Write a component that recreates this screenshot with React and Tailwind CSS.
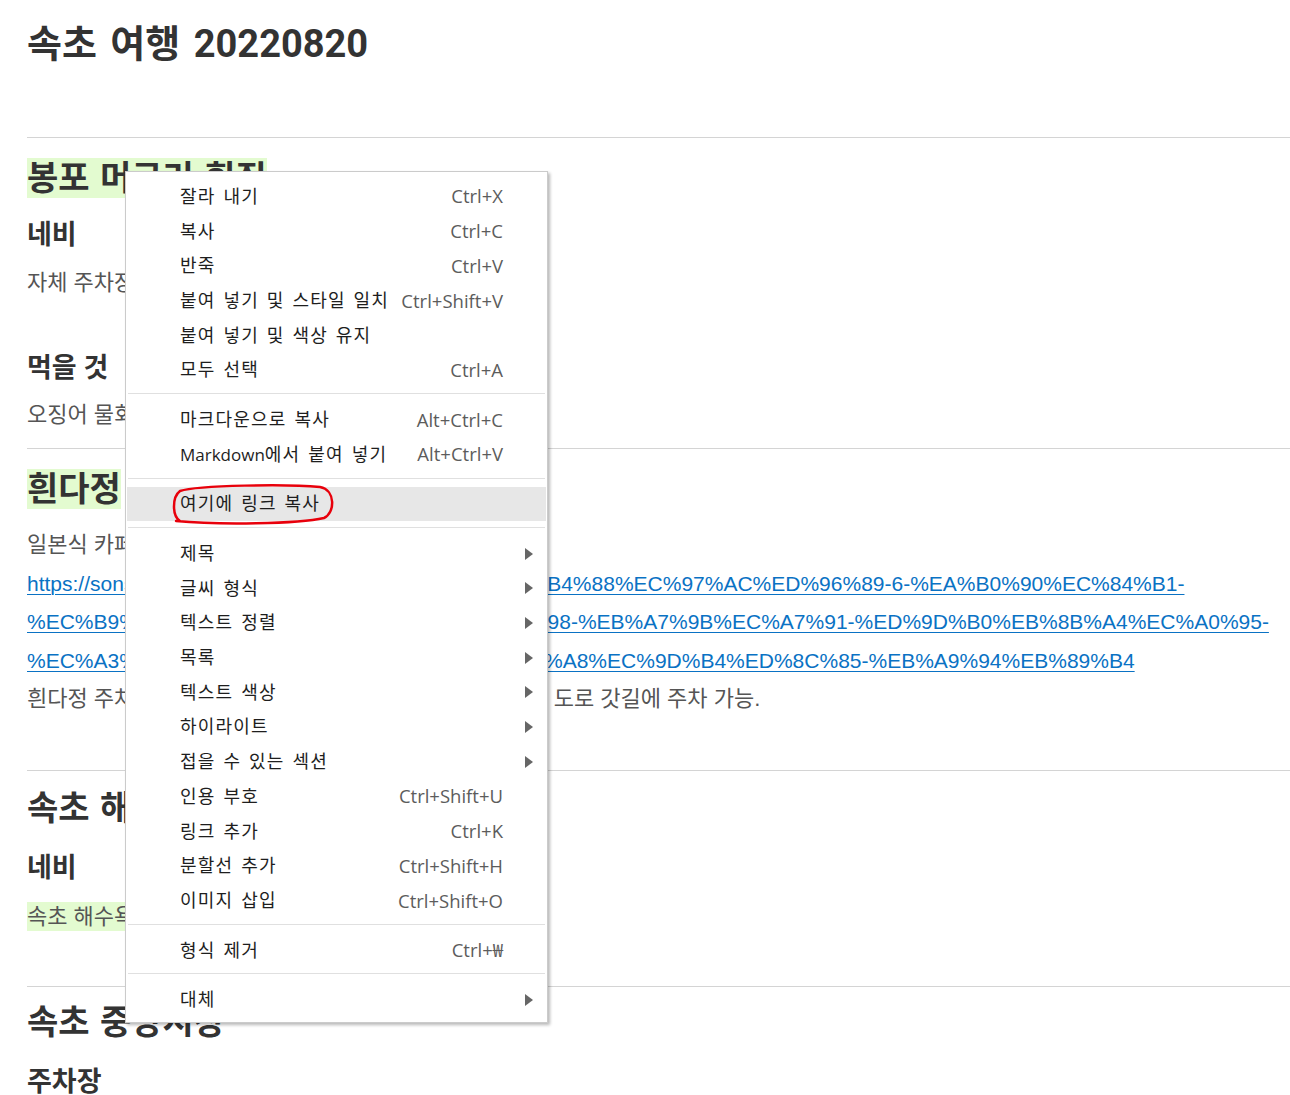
import React from "react";

const menuItems = [
  { label: "잘라 내기", sc: "Ctrl+X" },
  { label: "복사", sc: "Ctrl+C" },
  { label: "반죽", sc: "Ctrl+V" },
  { label: "붙여 넣기 및 스타일 일치", sc: "Ctrl+Shift+V" },
  { label: "붙여 넣기 및 색상 유지" },
  { label: "모두 선택", sc: "Ctrl+A" },
  { sep: true },
  { label: "마크다운으로 복사", sc: "Alt+Ctrl+C" },
  { label: "에서 붙여 넣기", latin: "Markdown", sc: "Alt+Ctrl+V" },
  { sep: true },
  { label: "여기에 링크 복사", active: true },
  { sep: true },
  { label: "제목", sub: true },
  { label: "글씨 형식", sub: true },
  { label: "텍스트 정렬", sub: true },
  { label: "목록", sub: true },
  { label: "텍스트 색상", sub: true },
  { label: "하이라이트", sub: true },
  { label: "접을 수 있는 섹션", sub: true },
  { label: "인용 부호", sc: "Ctrl+Shift+U" },
  { label: "링크 추가", sc: "Ctrl+K" },
  { label: "분할선 추가", sc: "Ctrl+Shift+H" },
  { label: "이미지 삽입", sc: "Ctrl+Shift+O" },
  { sep: true },
  { label: "형식 제거", sc: "Ctrl+₩" },
  { sep: true },
  { label: "대체", sub: true },
];

const Arrow = () => (
  <svg width="8" height="12" viewBox="0 0 8 12">
    <polygon points="0,0 8,6 0,12" fill="#666" />
  </svg>
);

const ContextMenu = () => (
  <div className="absolute left-[125px] top-[171px] w-[423px] bg-white border border-[#cbcbcb] shadow-[2px_2px_3px_rgba(0,0,0,0.28)] pt-[7px] pb-[5px] font-['Open_Sans','Noto_Sans_CJK_KR',sans-serif]">
    {menuItems.map((it, i) =>
      it.sep ? (
        <div key={i} className="mx-[2px] mt-[6px] mb-[8px] h-px bg-[#e0e0e0]" />
      ) : (
        <div
          key={i}
          className={`mx-px flex h-[34.7px] items-center pl-[53px] pr-[13px] ${
            it.active ? "bg-[#e7e7e7]" : ""
          }`}
        >
          <span className="whitespace-nowrap text-[18px] tracking-[1.2px] text-[#1e1e1e] [word-spacing:2px]">
            {it.latin && <span className="text-[17px] tracking-normal">{it.latin}</span>}
            {it.label}
          </span>
          <span className="ml-auto whitespace-nowrap text-[18.5px] text-[#5c5c5c]">{it.sc}</span>
          <span className="flex w-[30px] justify-end">{it.sub && <Arrow />}</span>
        </div>
      )
    )}
  </div>
);

const H2 = ({ children, mark }) => (
  <h2 className="h-[40px] text-[34px] font-bold leading-[40px] text-[#333] [word-spacing:2px]">
    <span className={mark ? "inline-block bg-[#e3fbd0]" : ""}>{children}</span>
  </h2>
);

const H3 = ({ children, className = "" }) => (
  <h3 className={`h-[36px] text-[27px] font-bold leading-[36px] text-[#333] ${className}`}>{children}</h3>
);

const P = ({ children, className = "" }) => (
  <p className={`h-[38px] text-[22px] leading-[38px] text-[#555] font-['Liberation_Sans','Noto_Sans_CJK_KR',sans-serif] ${className}`}>
    {children}
  </p>
);

const Hr = ({ className = "" }) => <div className={`h-px bg-[#d4d4d4] ${className}`} />;

export default function App() {
  return (
    <div className="relative min-h-[1095px] overflow-hidden bg-white font-['Liberation_Sans','Noto_Sans_CJK_KR',sans-serif]">
      <div className="pl-[27px] font-['Roboto','Noto_Sans_CJK_KR',sans-serif]">
        <h1 className="h-[88px] text-[38px] font-bold leading-[88px] text-[#333] [word-spacing:4px]">
          속초 여행 20220820
        </h1>
        <Hr className="mt-[49px]" />

        <div className="mt-[20px]">
          <H2 mark>봉포 머구리 횟집</H2>
        </div>
        <H3 className="mt-[19px]">네비</H3>
        <P className="mt-[11px]">자체 주차장 있음.</P>
        <H3 className="mt-[48px]">먹을 것</H3>
        <P className="mt-[10px]">오징어 물회, 모둠회</P>
        <Hr className="mt-[14px]" />

        <div className="mt-[20px]">
          <H2 mark>흰다정</H2>
        </div>
        <div className="mt-[17px] text-[22px] leading-[38.5px] text-[#555] font-['Liberation_Sans','Noto_Sans_CJK_KR',sans-serif]">
          <div>일본식 카페. 분위기 좋은 감성 카페.</div>
          <a
            href="#"
            className="block whitespace-nowrap text-[21px] text-[#0a72c4] underline decoration-1 underline-offset-[3px]"
          >
            <span className="block">https://sonsoon2.tistory.com/entry/%EC%86%8D%EC%B4%88%EC%97%AC%ED%96%89-6-%EA%B0%90%EC%84%B1-</span>
            <span className="block">%EC%B9%98%EC%90%88-%EC%B9%B4%ED%8E%98-%EB%A7%9B%EC%A7%91-%ED%9D%B0%EB%8B%A4%EC%A0%95-</span>
            <span className="block">%EC%A3%BC%EC%B0%A8%EC%DE%D5-%EC%B0%A8%EC%9D%B4%ED%8C%85-%EB%A9%94%EB%89%B4</span>
          </a>
          <div className="whitespace-nowrap">흰다정 주차장은 따로 없어서, 카페 앞 골목이나 근처 넓은 도로 갓길에 주차 가능.</div>
        </div>
        <Hr className="mt-[51px]" />

        <div className="mt-[17px]">
          <H2>속초 해수욕장</H2>
        </div>
        <H3 className="mt-[22px]">네비</H3>
        <div className="mt-[16px] h-[29px] text-[22px] leading-[29px] text-[#555] font-['Liberation_Sans','Noto_Sans_CJK_KR',sans-serif]">
          <span className="inline-block bg-[#e3fbd0]">속초 해수욕장 공영주차장</span>
        </div>
        <Hr className="mt-[55px]" />

        <div className="mt-[15px]">
          <H2>속초 중앙시장</H2>
        </div>
        <H3 className="mt-[22px]">주차장</H3>
      </div>

      <ContextMenu />

      <svg
        className="absolute left-[168px] top-[483px]"
        width="170"
        height="44"
        viewBox="0 0 170 44"
        fill="none"
      >
        <path
          d="M12 38 C4 33, 4 14, 12 8 C30 2, 120 1, 152 4 C168 7, 167 30, 156 35 C130 41, 50 42, 8 38"
          stroke="#e8000b"
          strokeWidth="2.5"
          strokeLinecap="round"
        />
      </svg>
    </div>
  );
}
